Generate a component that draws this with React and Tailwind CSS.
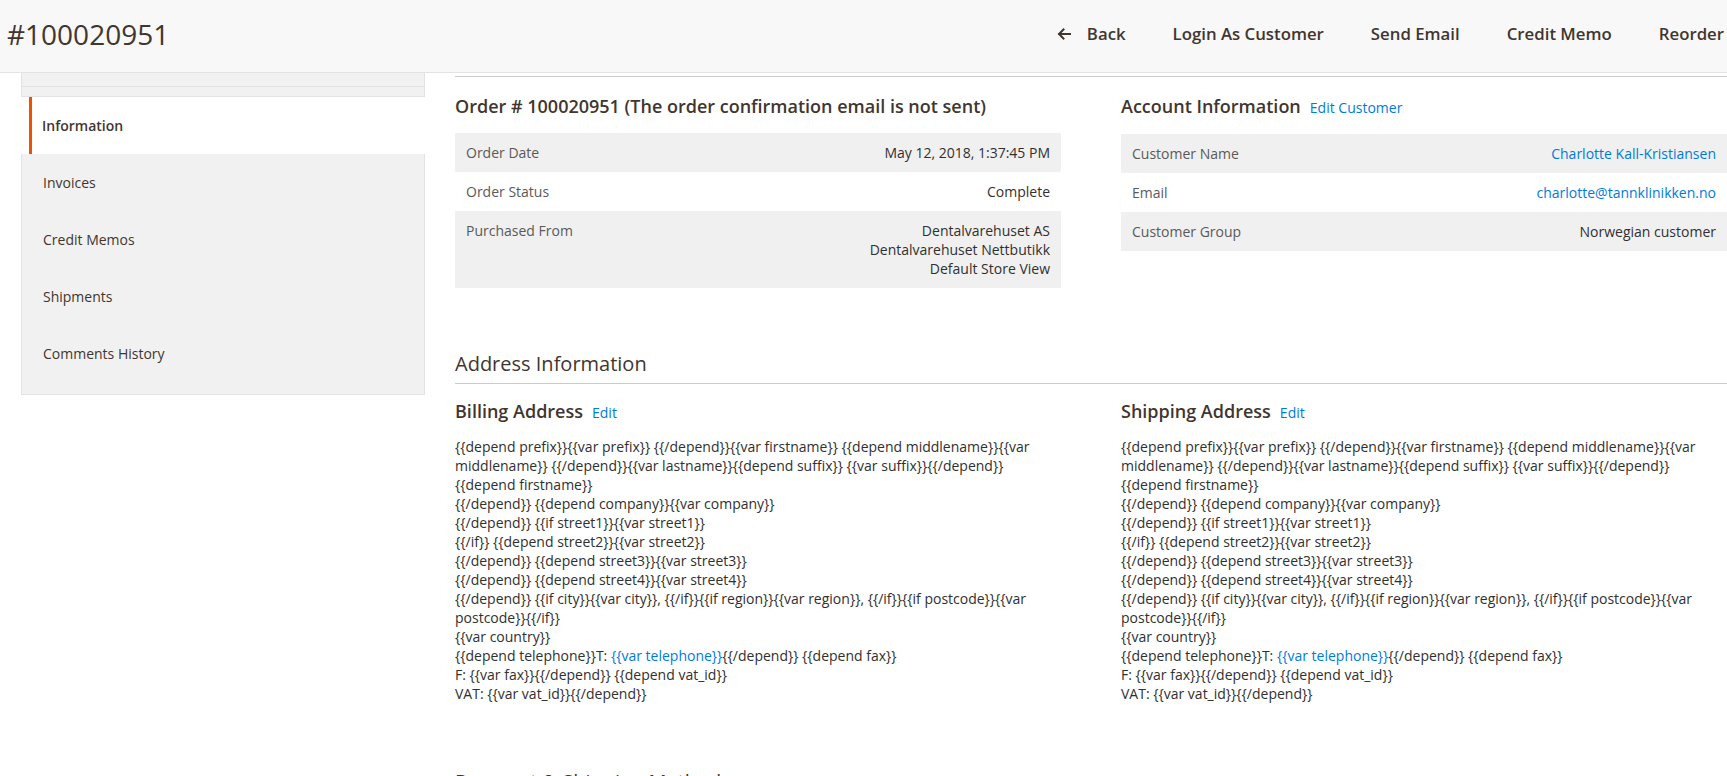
import React from 'react';

const addressLines = (
  <>
    {'{{depend prefix}}{{var prefix}} {{/depend}}{{var firstname}} {{depend middlename}}{{var middlename}} {{/depend}}{{var lastname}}{{depend suffix}} {{var suffix}}{{/depend}}'}
    <br />
    {'{{depend firstname}}'}
    <br />
    {'{{/depend}} {{depend company}}{{var company}}'}
    <br />
    {'{{/depend}} {{if street1}}{{var street1}}'}
    <br />
    {'{{/if}} {{depend street2}}{{var street2}}'}
    <br />
    {'{{/depend}} {{depend street3}}{{var street3}}'}
    <br />
    {'{{/depend}} {{depend street4}}{{var street4}}'}
    <br />
    {'{{/depend}} {{if city}}{{var city}}, {{/if}}{{if region}}{{var region}}, {{/if}}{{if postcode}}{{var postcode}}{{/if}}'}
    <br />
    {'{{var country}}'}
    <br />
    {'{{depend telephone}}T: '}
    <a className="text-[#007bdb]">{'{{var telephone}}'}</a>
    {'{{/depend}} {{depend fax}}'}
    <br />
    {'F: {{var fax}}{{/depend}} {{depend vat_id}}'}
    <br />
    {'VAT: {{var vat_id}}{{/depend}}'}
  </>
);

const Row = ({ label, children, shaded }) => (
  <div className={`flex justify-between px-[11px] py-[10px] leading-[19px] ${shaded ? 'bg-[#f0f0f0]' : 'bg-white'}`}>
    <div className="text-[#5a5a5a]">{label}</div>
    <div className="text-right text-[#303030]">{children}</div>
  </div>
);

const ArrowLeft = () => (
  <svg width="14" height="12" viewBox="0 0 14 12" fill="none" stroke="#41362f" strokeWidth="2" strokeLinecap="square">
    <path d="M13 6H2.5" />
    <path d="M6.5 1.5L2 6l4.5 4.5" />
  </svg>
);

const Tab = ({ children }) => (
  <div className="h-[57px] flex items-center pl-[21px] text-[#41362f]">{children}</div>
);

const App = () => {
  return (
    <div className="w-[1727px] h-[776px] overflow-hidden bg-white font-['Open_Sans',sans-serif] text-[14px] text-[#303030]">
      <header className="h-[73px] border-b border-[#e3e3e3] bg-[#f8f8f8] flex items-center justify-between pl-[7px] pr-[3px] pb-[4px]">
        <h1 className="text-[28px] font-normal leading-none text-[#41362f]">#100020951</h1>
        <nav className="flex items-center gap-[47px] text-[16.8px] font-semibold text-[#41362f]">
          <button className="flex items-center gap-[16px]">
            <ArrowLeft />
            <span>Back</span>
          </button>
          <button>Login As Customer</button>
          <button>Send Email</button>
          <button>Credit Memo</button>
          <button>Reorder</button>
        </nav>
      </header>

      <div className="flex pl-[21px]">
        <aside className="w-[404px] shrink-0">
          <div className="h-[14px] bg-[#f1f1f1] border-x border-b border-[#e3e3e3]" />
          <div className="h-[10px] bg-[#f1f1f1] border-x border-b border-[#e3e3e3]" />
          <div className="ml-[8px] h-[57px] bg-white border-l-[3px] border-[#eb5202] flex items-center pl-[10px] font-semibold text-[#41362f]">
            Information
          </div>
          <div className="bg-[#f1f1f1] border-x border-b border-[#e3e3e3] pb-[12px]">
            <Tab>Invoices</Tab>
            <Tab>Credit Memos</Tab>
            <Tab>Shipments</Tab>
            <Tab>Comments History</Tab>
          </div>
        </aside>

        <main className="ml-[30px] flex-1 pt-[3px]">
          <section className="border-t border-[#cccccc] pt-[18px] flex gap-[60px]">
            <div className="w-[606px] shrink-0">
              <h3 className="text-[18px] font-semibold leading-[22px] text-[#41362f]">
                Order # 100020951 (The order confirmation email is not sent)
              </h3>
              <div className="mt-[16px]">
                <Row label="Order Date" shaded>May 12, 2018, 1:37:45 PM</Row>
                <Row label="Order Status">Complete</Row>
                <Row label="Purchased From" shaded>
                  Dentalvarehuset AS
                  <br />
                  Dentalvarehuset Nettbutikk
                  <br />
                  Default Store View
                </Row>
              </div>
            </div>
            <div className="w-[606px] shrink-0">
              <div className="flex items-baseline gap-[9px]">
                <h3 className="text-[18px] font-semibold leading-[22px] text-[#41362f]">Account Information</h3>
                <a className="text-[#007bdb]">Edit Customer</a>
              </div>
              <div className="mt-[16px]">
                <Row label="Customer Name" shaded>
                  <a className="text-[#007bdb]">Charlotte Kall-Kristiansen</a>
                </Row>
                <Row label="Email">
                  <a className="text-[#007bdb]">charlotte@tannklinikken.no</a>
                </Row>
                <Row label="Customer Group" shaded>Norwegian customer</Row>
              </div>
            </div>
          </section>

          <section className="mt-[64px]">
            <h2 className="text-[20px] font-normal leading-[24px] pb-[7px] border-b border-[#cccccc] text-[#41362f]">
              Address Information
            </h2>
            <div className="flex gap-[60px] mt-[16px]">
              <div className="w-[606px] shrink-0">
                <div className="flex items-baseline gap-[9px]">
                  <h4 className="text-[18px] font-semibold leading-[22px] text-[#41362f]">Billing Address</h4>
                  <a className="text-[#007bdb]">Edit</a>
                </div>
                <address className="not-italic mt-[14px] leading-[19px]">{addressLines}</address>
              </div>
              <div className="w-[606px] shrink-0">
                <div className="flex items-baseline gap-[9px]">
                  <h4 className="text-[18px] font-semibold leading-[22px] text-[#41362f]">Shipping Address</h4>
                  <a className="text-[#007bdb]">Edit</a>
                </div>
                <address className="not-italic mt-[14px] leading-[19px]">{addressLines}</address>
              </div>
            </div>
          </section>

          <section className="mt-[67px]">
            <h2 className="text-[20px] font-normal leading-[24px] text-[#41362f]">Payment &amp; Shipping Method</h2>
          </section>
        </main>
      </div>
    </div>
  );
};

export default App;
